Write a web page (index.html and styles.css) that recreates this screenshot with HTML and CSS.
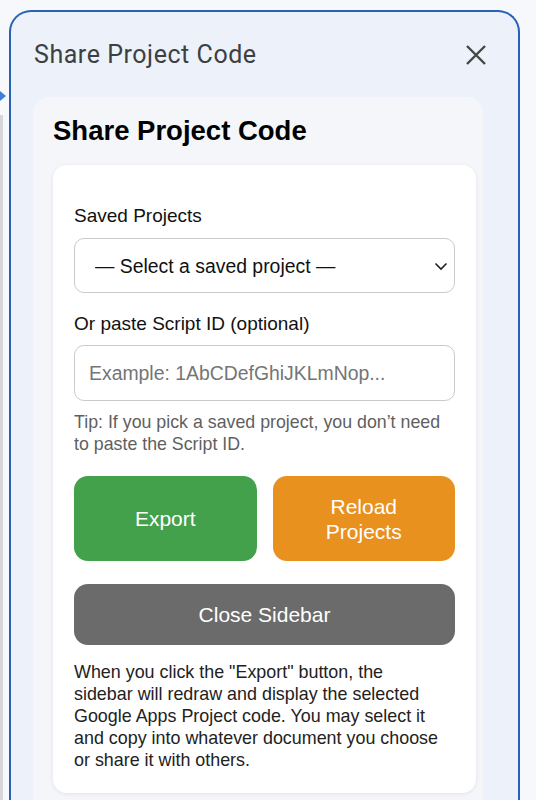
FILE: index.html
```html
<!DOCTYPE html>
<html lang="en">
<head>
<meta charset="utf-8">
<title>Share Project Code</title>
<link rel="stylesheet" href="styles.css">
</head>
<body>
<div class="backdrop-edge">
  <span class="edge-arrow"></span>
  <span class="edge-line"></span>
</div>
<div class="dialog">
  <div class="dialog-header">
    <div class="dialog-title">Share Project Code</div>
    <button class="close-btn" aria-label="Close">
      <svg width="22" height="22" viewBox="0 0 22 22"><path d="M2 2 L20 20 M20 2 L2 20" stroke="#444746" stroke-width="2.4" stroke-linecap="butt" fill="none"/></svg>
    </button>
  </div>
  <div class="panel">
    <h1 class="panel-heading">Share Project Code</h1>
    <div class="card">
      <label class="field-label">Saved Projects</label>
      <div class="select-wrap">
        <select class="select">
          <option>— Select a saved project —</option>
        </select>
        <svg class="chevron" width="14" height="9" viewBox="0 0 14 9"><path d="M1.5 1.5 L7 7 L12.5 1.5" stroke="#222" stroke-width="1.6" fill="none"/></svg>
      </div>
      <label class="field-label second">Or paste Script ID (optional)</label>
      <input class="text-input" type="text" placeholder="Example: 1AbCDefGhiJKLmNop...">
      <p class="tip">Tip: If you pick a saved project, you don’t need to paste the Script ID.</p>
      <div class="btn-row">
        <button class="btn btn-green">Export</button>
        <button class="btn btn-orange">Reload<br>Projects</button>
      </div>
      <button class="btn btn-gray">Close Sidebar</button>
      <p class="info">When you click the "Export" button, the sidebar will redraw and display the selected Google Apps Project code. You may select it and copy into whatever document you choose or share it with others.</p>
    </div>
  </div>
</div>
</body>
</html>
```

FILE: styles.css
```css
html, body {
  margin: 0;
  padding: 0;
  height: 800px;
  overflow: hidden;
  background: #f7f8fc;
}

body {
  position: relative;
  font-family: "Liberation Sans", Arial, sans-serif;
}

.backdrop-edge {
  position: absolute;
  left: 0;
  top: 0;
  width: 9px;
  height: 800px;
}

.edge-arrow {
  position: absolute;
  left: 0;
  top: 91px;
  width: 0;
  height: 0;
  border-top: 5px solid transparent;
  border-bottom: 5px solid transparent;
  border-left: 6px solid #3f7fd6;
}

.edge-line {
  position: absolute;
  left: 0;
  top: 115px;
  width: 3px;
  height: 685px;
  background: #d6d6d8;
}

.dialog {
  margin: 10px 0 0 9px;
  width: 507px;
  height: 830px;
  border: 2px solid #2862b6;
  border-bottom: none;
  border-radius: 22px 22px 0 0;
  background: #edf1f9;
  box-sizing: content-box;
}

.dialog-header {
  display: flex;
  align-items: center;
  justify-content: space-between;
  height: 85px;
  padding: 0 31px 0 23px;
}

.dialog-title {
  font-family: Roboto, "Noto Sans", sans-serif;
  font-size: 25px;
  letter-spacing: 0.55px;
  color: #3c4043;
}

.close-btn {
  border: none;
  background: transparent;
  padding: 0;
  width: 22px;
  height: 22px;
  display: flex;
}

.panel {
  margin: 0 35px 0 22px;
  background: #f4f6fa;
  border-radius: 16px 16px 0 0;
  padding: 18px 7px 0 20px;
  height: 760px;
}

.panel-heading {
  margin: 0;
  font-size: 27.5px;
  line-height: 32px;
  font-weight: bold;
  color: #000;
}

.card {
  margin-top: 18px;
  background: #fff;
  border-radius: 14px;
  box-shadow: 0 1px 4px rgba(0, 0, 0, 0.08);
  padding: 40px 21px 22px 21px;
  display: flex;
  flex-direction: column;
}

.field-label {
  font-size: 19px;
  line-height: 22px;
  color: #111;
}

.field-label.second {
  margin-top: 20px;
}

.select-wrap {
  position: relative;
  margin-top: 11px;
}

.select {
  appearance: none;
  -webkit-appearance: none;
  width: 100%;
  height: 55px;
  border: 1px solid #cacaca;
  border-radius: 10px;
  background: #fff;
  font-family: "Liberation Sans", Arial, sans-serif;
  font-size: 19.4px;
  color: #111;
  padding: 0 40px 0 20px;
  box-sizing: border-box;
}

.chevron {
  position: absolute;
  right: 7px;
  top: 24px;
}

.text-input {
  margin-top: 10px;
  height: 56px;
  border: 1px solid #cacaca;
  border-radius: 10px;
  font-family: "Liberation Sans", Arial, sans-serif;
  font-size: 19.4px;
  padding: 0 14px;
  box-sizing: border-box;
  width: 100%;
  color: #111;
}

.text-input::placeholder {
  color: #757575;
}

.tip {
  margin: 10px 0 0;
  font-size: 17.8px;
  line-height: 22px;
  color: #5f5f5f;
}

.btn-row {
  display: flex;
  gap: 16px;
  margin-top: 21px;
}

.btn {
  border: none;
  border-radius: 14px;
  color: #fff;
  font-family: "Liberation Sans", Arial, sans-serif;
  font-size: 21px;
  line-height: 25px;
  padding: 0 16px;
}

.btn-row .btn {
  flex: 1;
  height: 85px;
}

.btn-green {
  background: #43a04b;
}

.btn-orange {
  background: #e8911f;
}

.btn-gray {
  margin-top: 23px;
  height: 61px;
  background: #6b6b6b;
  width: 100%;
}

.info {
  margin: 16px 0 0;
  padding-right: 14px;
  font-size: 17.9px;
  line-height: 22px;
  color: #222;
}
```
